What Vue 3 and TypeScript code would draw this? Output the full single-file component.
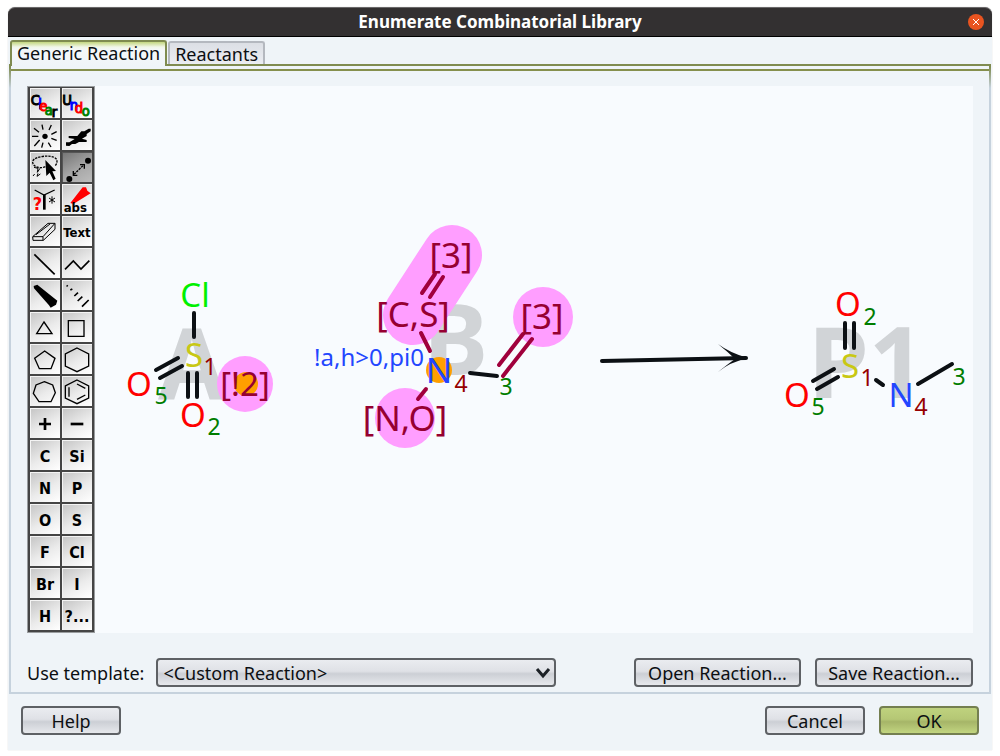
<script setup lang="ts">
import { ref } from 'vue'

interface Tool { id: string; label: string; text?: string; small?: boolean }
interface Atom { x: number; y: number; text: string; kind: string; size: 'atom' | 'index' | 'group' | 'rule' }
interface Bond { from: [number, number]; to: [number, number]; group?: boolean }

const tools: Tool[] = [
  { id: 'clear', label: 'Clear' },
  { id: 'undo', label: 'Undo' },
  { id: 'clean', label: 'Clean up' },
  { id: 'chiral', label: 'Rotate in space' },
  { id: 'lasso', label: 'Lasso' },
  { id: 'map', label: 'Map atoms' },
  { id: 'query', label: 'Query features' },
  { id: 'abs', label: 'Absolute stereo' },
  { id: 'eraser', label: 'Eraser' },
  { id: 'text', label: 'Text', text: 'Text', small: true },
  { id: 'bond', label: 'Bond' },
  { id: 'chain', label: 'Chain' },
  { id: 'up', label: 'Up bond' },
  { id: 'down', label: 'Down bond' },
  { id: 'ring3', label: 'Three ring' },
  { id: 'ring4', label: 'Four ring' },
  { id: 'ring5', label: 'Five ring' },
  { id: 'ring6', label: 'Six ring' },
  { id: 'ring7', label: 'Seven ring' },
  { id: 'benzene', label: 'Benzene' },
  { id: 'plus', label: 'Positive charge' },
  { id: 'minus', label: 'Negative charge' },
  ...['C', 'Si', 'N', 'P', 'O', 'S', 'F', 'Cl', 'Br', 'I', 'H', '?...'].map((t) => ({ id: 'el-' + t, label: t, text: t })),
]

const activeTool = ref('map')
const activeTab = ref('Generic Reaction')
const tabs = ['Generic Reaction', 'Reactants']
const template = ref('<Custom Reaction>')

const bonds: Bond[] = [
  { from: [194, 313], to: [194, 337] },
  { from: [156, 370], to: [178, 358] },
  { from: [160, 378], to: [182, 366] },
  { from: [188, 373], to: [188, 397] },
  { from: [197, 373], to: [197, 397] },
  { from: [435, 274], to: [422, 293], group: true },
  { from: [443, 277], to: [430, 297], group: true },
  { from: [421, 333], to: [430, 351], group: true },
  { from: [426, 389], to: [418, 399], group: true },
  { from: [523, 334], to: [499, 365], group: true },
  { from: [532, 339], to: [503, 376], group: true },
  { from: [470, 373], to: [497, 376] },
  { from: [845, 323], to: [845, 348] },
  { from: [854, 323], to: [854, 348] },
  { from: [813, 381], to: [834, 369] },
  { from: [817, 389], to: [838, 377] },
  { from: [876, 380], to: [883, 385] },
  { from: [918, 384], to: [952, 364] },
  { from: [602, 361], to: [746, 358] },
]

const atoms: Atom[] = [
  { x: 195, y: 307, text: 'Cl', kind: 'chlorine', size: 'atom' },
  { x: 194, y: 367, text: 'S', kind: 'sulfur', size: 'atom' },
  { x: 139, y: 396, text: 'O', kind: 'oxygen', size: 'atom' },
  { x: 193, y: 427, text: 'O', kind: 'oxygen', size: 'atom' },
  { x: 210, y: 375, text: '1', kind: 'manual', size: 'index' },
  { x: 161, y: 404, text: '5', kind: 'auto', size: 'index' },
  { x: 214, y: 435, text: '2', kind: 'auto', size: 'index' },
  { x: 245, y: 396, text: '[!2]', kind: 'excluded', size: 'atom' },
  { x: 451, y: 268, text: '[3]', kind: 'excluded', size: 'group' },
  { x: 413, y: 327, text: '[C,S]', kind: 'excluded', size: 'group' },
  { x: 542, y: 329, text: '[3]', kind: 'excluded', size: 'group' },
  { x: 405, y: 431, text: '[N,O]', kind: 'excluded', size: 'group' },
  { x: 439, y: 383, text: 'N', kind: 'nitrogen', size: 'group' },
  { x: 369, y: 366, text: '!a,h>0,pi0', kind: 'nitrogen', size: 'rule' },
  { x: 461, y: 392, text: '4', kind: 'manual', size: 'index' },
  { x: 506, y: 395, text: '3', kind: 'auto', size: 'index' },
  { x: 848, y: 316, text: 'O', kind: 'oxygen', size: 'atom' },
  { x: 870, y: 325, text: '2', kind: 'auto', size: 'index' },
  { x: 850, y: 378, text: 'S', kind: 'sulfur', size: 'atom' },
  { x: 867, y: 386, text: '1', kind: 'manual', size: 'index' },
  { x: 797, y: 407, text: 'O', kind: 'oxygen', size: 'atom' },
  { x: 818, y: 415, text: '5', kind: 'auto', size: 'index' },
  { x: 901, y: 407, text: 'N', kind: 'nitrogen', size: 'atom' },
  { x: 921, y: 415, text: '4', kind: 'manual', size: 'index' },
  { x: 959, y: 385, text: '3', kind: 'auto', size: 'index' },
]
</script>

<template>
  <main class="window">
    <header class="titlebar">
      <h1>Enumerate Combinatorial Library</h1>
      <button class="close" type="button" aria-label="Close">
        <svg viewBox="0 0 16 16"><path d="M5 5L11 11M11 5L5 11" /></svg>
      </button>
    </header>

    <nav class="tabs" role="tablist">
      <button
        v-for="tab in tabs"
        :key="tab"
        type="button"
        role="tab"
        class="tab"
        :class="{ active: tab === activeTab }"
        :aria-selected="tab === activeTab"
        @click="activeTab = tab"
      >{{ tab }}</button>
    </nav>

    <section class="panel">
      <div class="panel-body">
        <div class="editor">
          <div class="toolbar" role="toolbar" aria-label="Drawing tools">
            <button
              v-for="tool in tools"
              :key="tool.id"
              type="button"
              class="tool"
              :class="{ pressed: tool.id === activeTool, lettered: tool.text, small: tool.small }"
              :aria-label="tool.label"
              @click="activeTool = tool.id"
            >
              <template v-if="tool.text">{{ tool.text }}</template>
              <svg v-else viewBox="0 0 90 90">
                <g v-if="tool.id === 'clear'" class="letters">
                  <text x="2" y="50">C</text>
                  <text class="blue" x="25" y="62">l</text>
                  <text class="red" x="28" y="70">e</text>
                  <text class="green" x="44" y="80">a</text>
                  <text x="65" y="86">r</text>
                </g>
                <g v-else-if="tool.id === 'undo'" class="letters">
                  <text x="1" y="50">U</text>
                  <text class="blue" x="23" y="65">n</text>
                  <text class="red" x="38" y="76">d</text>
                  <text class="green" x="59" y="83">o</text>
                </g>
                <g v-else-if="tool.id === 'clean'">
                  <circle cx="45" cy="49" r="8" />
                  <path class="line" d="M36 14L39 29M64 15L57 30M80 35L64 43M64 55L80 61M55 68L63 81M39 68L35 83M29 60L13 78M6 49H25M12 25L27 37" />
                </g>
                <path v-else-if="tool.id === 'chiral'" d="M12 77V67H22L38 57L20 54V48H46L58 34H67L80 26H86V34L74 42V48L60 56L74 60V66H51L40 72H30L22 78Z" />
                <g v-else-if="tool.id === 'lasso'">
                  <path class="line dashed" d="M46 44C28 52 6 43 8 28C11 13 65 6 78 20C84 28 80 38 74 42" />
                  <path class="line thin" d="M12 46L24 49L22 61L30 49M14 66L9 72M24 64L21 73L31 66" />
                  <path d="M46 24L78 57L67 58L77 80L70 85L59 62L49 72Z" />
                </g>
                <g v-else-if="tool.id === 'map'">
                  <circle cx="78" cy="26" r="9" />
                  <circle cx="22" cy="81" r="9" />
                  <path class="line dashed" d="M36 67L64 40" />
                  <path class="line" d="M34 57V70H46M54 38H67V50" />
                </g>
                <g v-else-if="tool.id === 'query'">
                  <text class="mark red" x="8" y="77">?</text>
                  <path class="line" d="M14 18L42 33L74 18" />
                  <path class="heavy" d="M43 32V77" />
                  <path class="line thin" d="M66 37V59M57 42L75 54M75 42L57 54" />
                </g>
                <g v-else-if="tool.id === 'abs'">
                  <path class="red" d="M25 57L62 10L72 10L76 20L86 28L34 60Z" />
                  <text class="abs" x="5" y="84">abs</text>
                </g>
                <path v-else-if="tool.id === 'eraser'" class="line thin" d="M8 62L54 22H75V40L40 73H9ZM9 62H39V73M39 62L74 23M18 56L60 24" />
                <path v-else-if="tool.id === 'bond'" class="line medium" d="M13 19L74 79" />
                <path v-else-if="tool.id === 'chain'" class="line medium" d="M9 64L34 39L57 63L82 38" />
                <path v-else-if="tool.id === 'up'" d="M11 18L22 14L82 62L78 74L62 83L57 76L12 25Z" />
                <path v-else-if="tool.id === 'down'" class="line medium" d="M14 16L17 19M25 30L31 27M37 48L48 38M47 63L61 50M60 80L80 60" />
                <path v-else-if="tool.id === 'ring3'" class="line" d="M42 30L66 65H20Z" />
                <path v-else-if="tool.id === 'ring4'" class="line" d="M19 26H66V73H19Z" />
                <path v-else-if="tool.id === 'ring5'" class="line" d="M44 21L75 43L63 74H28L14 43Z" />
                <path v-else-if="tool.id === 'ring6'" class="line" d="M45 12L80 30V66L45 83L10 66V30Z" />
                <path v-else-if="tool.id === 'ring7'" class="line" d="M43 17L68 27L76 50L63 77H27L10 52L18 27Z" />
                <path v-else-if="tool.id === 'benzene'" class="line" d="M45 12L80 30V66L45 83L10 66V30ZM21 34V62M45 24L70 37M45 70L70 57" />
                <path v-else-if="tool.id === 'plus'" class="heavy" d="M27 48H63M45 30V66" />
                <path v-else-if="tool.id === 'minus'" class="heavy" d="M26 48H64" />
              </svg>
            </button>
          </div>

          <svg class="drawing" viewBox="94 86 879 547" role="img" aria-label="Generic reaction: A plus B gives P1">
            <g class="backdrop">
              <text x="158" y="400">A</text>
              <text x="423" y="375">B</text>
              <text x="808" y="398">P1</text>
            </g>
            <g class="highlight">
              <circle cx="245" cy="384" r="28" />
              <circle cx="543" cy="317" r="30" />
              <circle cx="405" cy="418" r="30" />
              <line x1="452" y1="255" x2="413" y2="315" />
            </g>
            <g class="selection">
              <circle cx="246" cy="384" r="12" />
              <circle cx="439" cy="370" r="13" />
            </g>
            <line
              v-for="(bond, i) in bonds"
              :key="'b' + i"
              class="bond"
              :class="{ marked: bond.group }"
              :x1="bond.from[0]"
              :y1="bond.from[1]"
              :x2="bond.to[0]"
              :y2="bond.to[1]"
            />
            <path class="arrowhead" d="M718 344Q730 353 748 358Q730 362 718 372Q728 364 735 359Q728 352 718 344Z" />
            <text
              v-for="(atom, i) in atoms"
              :key="'a' + i"
              :x="atom.x"
              :y="atom.y"
              :class="[atom.kind, atom.size]"
            >{{ atom.text }}</text>
          </svg>
        </div>

        <div class="template-row">
          <label for="template">Use template:</label>
          <span class="select">
            <select id="template" v-model="template">
              <option>&lt;Custom Reaction&gt;</option>
            </select>
            <svg viewBox="0 0 16 12"><path d="M2 2L8 9L14 2" /></svg>
          </span>
          <button class="btn open" type="button">Open Reaction...</button>
          <button class="btn save" type="button">Save Reaction...</button>
        </div>
      </div>
    </section>

    <footer class="actions">
      <button class="btn" type="button">Help</button>
      <button class="btn cancel" type="button">Cancel</button>
      <button class="btn ok" type="button">OK</button>
    </footer>
  </main>
</template>

<style>
body {
  margin: 0;
  background: #fff;
}
</style>

<style scoped>
* {
  box-sizing: border-box;
}
.window {
  display: flex;
  flex-direction: column;
  min-height: calc(100vh - 14px);
  margin: 7px 8px;
  background: #eff4f8;
  border-radius: 7px 7px 0 0;
  box-shadow: 0 0 1px #aaa;
  color: #0c0f12;
  font: 18px/24px "Noto Sans", "Open Sans", sans-serif;
}
button,
select {
  margin: 0;
  padding: 0;
  color: inherit;
  font: inherit;
}
.titlebar {
  display: grid;
  grid-template-columns: 24px 1fr 24px;
  align-items: center;
  height: 30px;
  background: #333031;
  border-top: 1px solid #6a6869;
  border-bottom: 1px solid #000;
  border-radius: 7px 7px 0 0;
}
h1 {
  grid-column: 2;
  margin: 0;
  color: #fff;
  font-size: 17px;
  font-weight: 700;
  line-height: 24px;
  text-align: center;
}
.close {
  width: 16px;
  height: 16px;
  border: 0;
  border-radius: 50%;
  background: #e95420;
}
.close svg {
  display: block;
  fill: none;
  stroke: #fff;
  stroke-width: 1;
}
.tabs {
  display: flex;
  align-items: flex-end;
  gap: 1px;
  padding: 3px 2px 0;
  height: 27px;
}
.tab {
  height: 23px;
  padding: 0 5px;
  border: 2px solid #b4b8bf;
  border-bottom: 0;
  border-radius: 3px 3px 0 0;
  background: linear-gradient(#dcdfe5, #ebedf2);
  line-height: 20px;
}
.tab.active {
  position: relative;
  z-index: 1;
  height: 26px;
  margin-bottom: -2px;
  padding: 0 5px 3px;
  border-color: #7f8b50;
  background: linear-gradient(#c3d67f, #f1f6e8 5px, #f4f7f9 8px, #eff4f8);
}
.panel {
  display: flex;
  flex: 1;
  margin: 0 1px;
  border: 2px solid #c6d2dd;
  border-image: linear-gradient(#7f8b50, #7f8b50 3px, #c6d2dd 24px) 2;
}
.panel-body {
  display: flex;
  flex: 1;
  flex-direction: column;
  margin-top: 3px;
  padding: 15px 16px 5px;
  border-top: 2px solid #858f4d;
}
.editor {
  display: flex;
  flex: 1;
  align-items: flex-start;
  background: #f8fbfe;
}
.toolbar {
  display: grid;
  grid-template-columns: 32px 32px;
  margin: 1px 0 0 1px;
  padding: 1px 0 0 2px;
  background: #454545;
  box-shadow: 0 0 0 1px #9a9d9f;
}
.tool {
  display: flex;
  align-items: center;
  justify-content: center;
  width: 32px;
  height: 32px;
  border: solid #454545;
  border-width: 0 2px 2px 0;
  background: linear-gradient(150deg, #c4c4c4, #ebebeb 55%, #fff);
  box-shadow: inset 1px 1px 0 #f4f4f4;
  color: #000;
  font: 700 16px/24px "DejaVu Sans Condensed", "DejaVu Sans", sans-serif;
}
.tool.lettered {
  padding-top: 3px;
}
.tool.small {
  font-size: 13px;
}
.tool.pressed {
  background: linear-gradient(150deg, #737373, #a9a9a9 60%, #bcbcbc);
  box-shadow: inset 1px 1px 0 #555;
}
.tool svg {
  display: block;
  flex: none;
  width: 30px;
  height: 30px;
}
.letters text {
  font-size: 44px;
  font-weight: 400;
  stroke: currentColor;
  stroke-width: 3;
}
.letters .blue {
  fill: #00f;
  stroke: #00f;
}
.letters .green {
  fill: #008000;
  stroke: #008000;
}
.letters .red {
  stroke: #f00;
}
.tool .red {
  fill: #f00;
}
.mark {
  font-size: 54px;
}
.abs {
  font-size: 39px;
}
.line {
  fill: none;
  stroke: #000;
  stroke-width: 4;
}
.thin {
  stroke-width: 3;
}
.medium {
  stroke-width: 5;
}
.heavy {
  fill: none;
  stroke: #000;
  stroke-width: 8;
}
.dashed {
  stroke-dasharray: 7 3;
}
.drawing {
  flex: 1;
  min-width: 0;
  height: 547px;
}
.drawing text {
  text-anchor: middle;
}
.drawing .backdrop text {
  fill: #d1d4d7;
  font-size: 98px;
  font-weight: 700;
  text-anchor: start;
}
.highlight {
  fill: #ff9eff;
}
.highlight line {
  stroke: #ff9eff;
  stroke-width: 60;
  stroke-linecap: round;
}
.selection {
  fill: #ff9f00;
}
.bond {
  stroke: #0c1014;
  stroke-width: 4;
  stroke-linecap: round;
}
.bond.marked {
  stroke: #a0003c;
}
.arrowhead {
  fill: #0c1014;
}
.atom {
  font-size: 33px;
}
.group {
  font-size: 35px;
}
.index {
  font-size: 23px;
}
.rule {
  font-size: 24px;
}
.chlorine {
  fill: #00f000;
}
.sulfur {
  fill: #c8c814;
}
.oxygen {
  fill: #f00;
}
.nitrogen {
  fill: #2346ff;
}
.excluded {
  fill: #960032;
}
.manual {
  fill: #960000;
}
.auto {
  fill: #007d00;
}
.template-row {
  display: flex;
  align-items: center;
  gap: 14px;
  margin-top: 25px;
}
.template-row label {
  margin-right: -2px;
}
.btn,
.select select {
  height: 29px;
  border: 2px solid #5e6165;
  border-radius: 4px;
  background: linear-gradient(#eaecf0, #dfe1e6 45%, #cccfd5 55%, #e6e8ec);
  line-height: 22px;
}
.btn {
  width: 100px;
}
.btn.open {
  width: 167px;
  margin-left: auto;
}
.btn.save {
  width: 158px;
}
.select {
  position: relative;
  width: 400px;
}
.select select {
  display: block;
  width: 100%;
  padding: 0 32px 0 5px;
  appearance: none;
}
.select svg {
  position: absolute;
  top: 9px;
  right: 5px;
  width: 16px;
  height: 12px;
  fill: none;
  stroke: #1c2126;
  stroke-width: 3;
  pointer-events: none;
}
.actions {
  display: flex;
  gap: 14px;
  padding: 12px 13px 15px;
}
.cancel {
  margin-left: auto;
}
.btn.ok {
  border-color: #747f50;
  background: linear-gradient(#bfd27e, #b5c775 45%, #a6b568 55%, #c2d580);
}
</style>
